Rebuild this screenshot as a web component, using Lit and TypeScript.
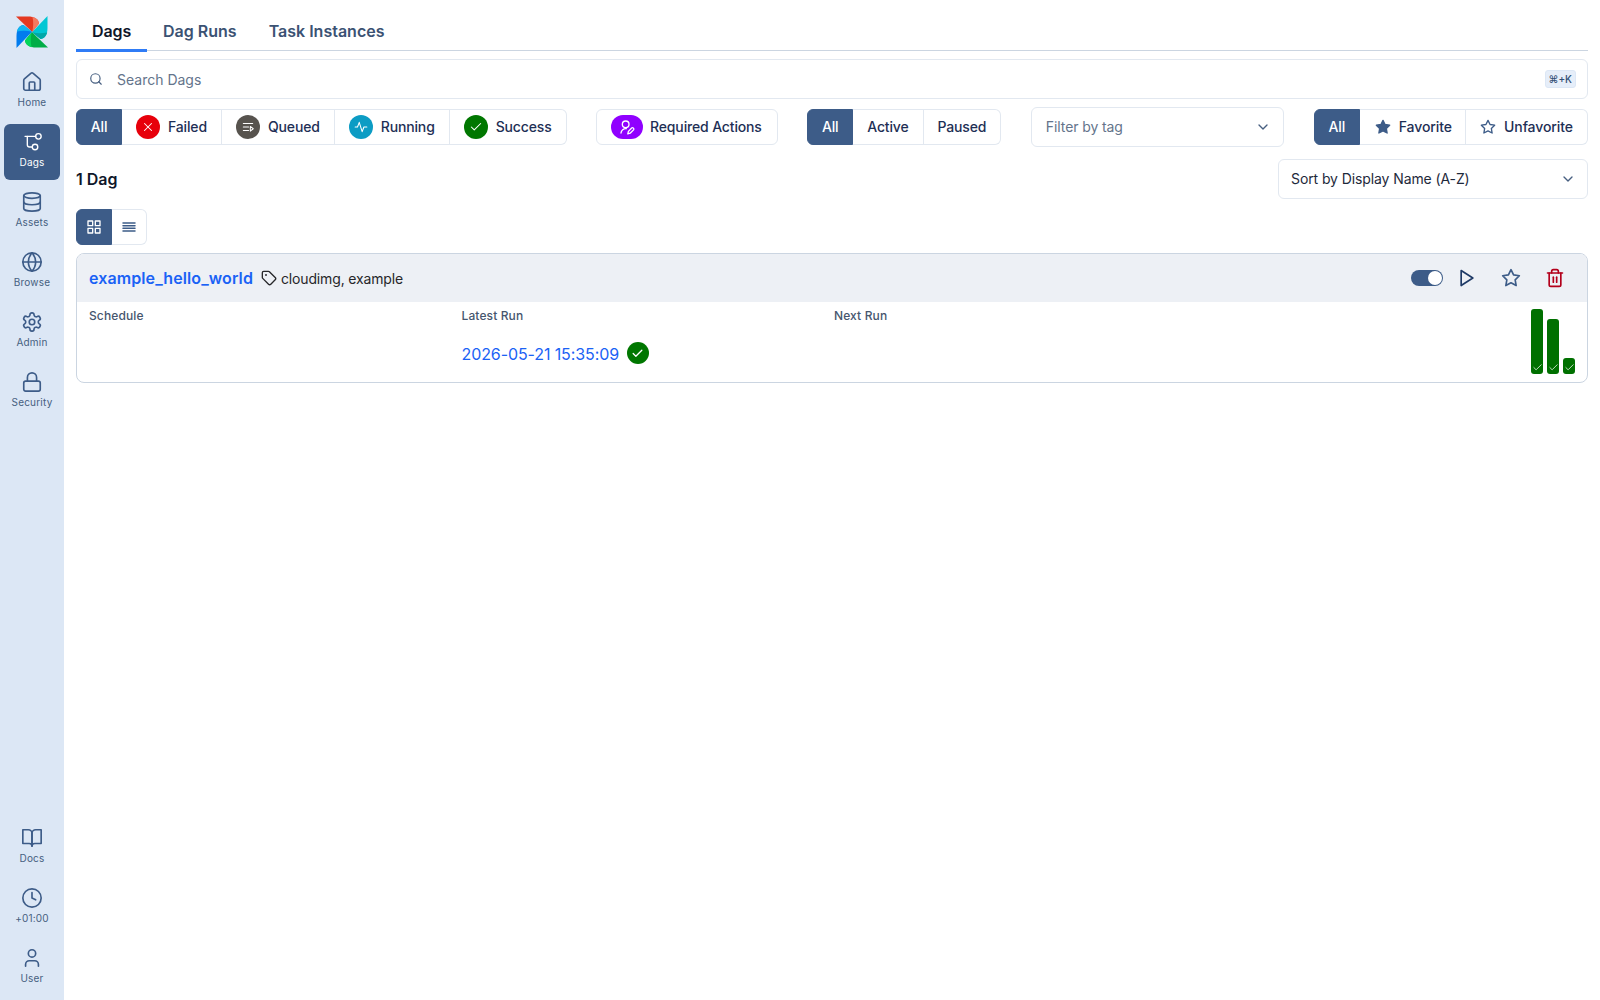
import { LitElement, html, css, svg } from 'lit';
import { customElement } from 'lit/decorators.js';

const icon = (body: unknown, size = 24, sw = 2) => html`<svg
  width=${size}
  height=${size}
  viewBox="0 0 24 24"
  fill="none"
  stroke="currentColor"
  stroke-width=${sw}
  stroke-linecap="round"
  stroke-linejoin="round"
>
  ${body}
</svg>`;

const icons = {
  home: svg`<path d="M15 21v-8a1 1 0 0 0-1-1h-4a1 1 0 0 0-1 1v8" /><path d="M3 10a2 2 0 0 1 .709-1.528l7-5.999a2 2 0 0 1 2.582 0l7 5.999A2 2 0 0 1 21 10v9a2 2 0 0 1-2 2H5a2 2 0 0 1-2-2z" />`,
  dags: svg`<path d="M4.400 5.800H16" /><circle cx="19" cy="5.800" r="3" /><path d="M6.900 5.800V15a2.500 2.500 0 0 0 2.500 2.500h2.900" /><circle cx="15.300" cy="17.500" r="3" />`,
  assets: svg`<ellipse cx="12" cy="5" rx="9" ry="3" /><path d="M3 5v14a9 3 0 0 0 18 0V5" /><path d="M3 12a9 3 0 0 0 18 0" />`,
  globe: svg`<circle cx="12" cy="12" r="10" /><path d="M2 12h20" /><path d="M12 2a15.3 15.3 0 0 1 4 10 15.3 15.3 0 0 1-4 10 15.3 15.3 0 0 1-4-10 15.3 15.3 0 0 1 4-10z" />`,
  gear: svg`<path d="M12.22 2h-.44a2 2 0 0 0-2 2v.18a2 2 0 0 1-1 1.73l-.43.25a2 2 0 0 1-2 0l-.15-.08a2 2 0 0 0-2.73.73l-.22.38a2 2 0 0 0 .73 2.73l.15.1a2 2 0 0 1 1 1.72v.51a2 2 0 0 1-1 1.74l-.15.09a2 2 0 0 0-.73 2.73l.22.38a2 2 0 0 0 2.73.73l.15-.08a2 2 0 0 1 2 0l.43.25a2 2 0 0 1 1 1.73V20a2 2 0 0 0 2 2h.44a2 2 0 0 0 2-2v-.18a2 2 0 0 1 1-1.73l.43-.25a2 2 0 0 1 2 0l.15.08a2 2 0 0 0 2.73-.73l.22-.39a2 2 0 0 0-.73-2.73l-.15-.08a2 2 0 0 1-1-1.74v-.5a2 2 0 0 1 1-1.74l.15-.09a2 2 0 0 0 .73-2.73l-.22-.38a2 2 0 0 0-2.73-.73l-.15.08a2 2 0 0 1-2 0l-.43-.25a2 2 0 0 1-1-1.73V4a2 2 0 0 0-2-2z" /><circle cx="12" cy="12" r="3" />`,
  lock: svg`<rect x="3" y="11" width="18" height="11" rx="2" ry="2" /><path d="M7 11V7a5 5 0 0 1 10 0v4" />`,
  book: svg`<path d="M2 3h6a4 4 0 0 1 4 4v14a3 3 0 0 0-3-3H2z" /><path d="M22 3h-6a4 4 0 0 0-4 4v14a3 3 0 0 1 3-3h7z" />`,
  clock: svg`<circle cx="12" cy="12" r="10" /><polyline points="12 6 12 12 16 14" />`,
  user: svg`<path d="M19 21v-2a4 4 0 0 0-4-4H9a4 4 0 0 0-4 4v2" /><circle cx="12" cy="7" r="4" />`,
  search: svg`<circle cx="11" cy="11" r="8" /><path d="m21 21-4.3-4.3" />`,
  chevron: svg`<path d="m6 9 6 6 6-6" />`,
  x: svg`<path d="M18 6 6 18" /><path d="m6 6 12 12" />`,
  queued: svg`<path d="M4 6h16" /><path d="M4 12h9" /><path d="M4 18h9" /><path d="M16 11l5 4-5 4z" />`,
  activity: svg`<path d="M2 12h4l3 -8 5 16 3 -8h5" />`,
  check: svg`<path d="M20 6 9 17l-5-5" />`,
  pen: svg`<circle cx="10" cy="8" r="5" /><path d="M3 21a7 7 0 0 1 8-6.5" /><path d="M19 13.5a2 2 0 0 1 2.8 2.8l-5 5-3.6.9.9-3.6z" />`,
  star: svg`<polygon points="12 2 15.09 8.26 22 9.27 17 14.14 18.18 21.02 12 17.77 5.82 21.02 7 14.14 2 9.27 8.91 8.26 12 2" />`,
  grid: svg`<rect x="3" y="3" width="7" height="7" /><rect x="14" y="3" width="7" height="7" /><rect x="14" y="14" width="7" height="7" /><rect x="3" y="14" width="7" height="7" />`,
  lines: svg`<path d="M3 6h18" /><path d="M3 10h18" /><path d="M3 14h18" /><path d="M3 18h18" />`,
  tag: svg`<path d="M12.586 2.586A2 2 0 0 0 11.172 2H4a2 2 0 0 0-2 2v7.172a2 2 0 0 0 .586 1.414l8.704 8.704a2.426 2.426 0 0 0 3.42 0l6.58-6.58a2.426 2.426 0 0 0 0-3.42z" /><circle cx="7.5" cy="7.5" r=".5" fill="currentColor" />`,
  play: svg`<polygon points="5 3 19 12 5 21 5 3" />`,
  trash: svg`<path d="M3 6h18" /><path d="M19 6v14a2 2 0 0 1-2 2H7a2 2 0 0 1-2-2V6" /><path d="M8 6V4a2 2 0 0 1 2-2h4a2 2 0 0 1 2 2v2" /><path d="M10 11v6" /><path d="M14 11v6" />`,
};

const topNav = [
  { label: 'Home', icon: icons.home },
  { label: 'Dags', icon: icons.dags, active: true },
  { label: 'Assets', icon: icons.assets },
  { label: 'Browse', icon: icons.globe },
  { label: 'Admin', icon: icons.gear },
  { label: 'Security', icon: icons.lock },
];

const bottomNav = [
  { label: 'Docs', icon: icons.book },
  { label: '+01:00', icon: icons.clock },
  { label: 'User', icon: icons.user },
];

const states = [
  { label: 'Failed', color: '#e7000b', icon: icons.x },
  { label: 'Queued', color: '#57534e', icon: icons.queued },
  { label: 'Running', color: '#0c9cc4', icon: icons.activity },
  { label: 'Success', color: '#007700', icon: icons.check },
];

// pinwheel blades, one per quarter turn, [main, highlight]
const blades = [
  [0, '#e43921', '#f47a5f'],
  [90, '#00c7d4', '#00a7a8'],
  [180, '#00ad46', '#04d659'],
  [270, '#017cee', '#11b5f0'],
] as const;

const runs = [65, 55, 16];

@customElement('app-root')
export class AppRoot extends LitElement {
  navItem(item: { label: string; icon: unknown; active?: boolean }) {
    return html`<a class="nav-item ${item.active ? 'active' : ''}">
      ${icon(item.icon, 22, item.active ? 1.5 : 1.8)}
      <span>${item.label}</span>
    </a>`;
  }

  render() {
    return html`
      <nav class="sidebar">
        <svg class="logo" width="32" height="32" viewBox="0 0 32 32">
          ${blades.map(
            ([deg, main, light]) => svg`<g transform="rotate(${deg} 16 16)">
              <path d="M0 .500H12C18 .500 22.500 3 23 7.500L16.200 16Z" fill=${main} />
              <path d="M16.500 .800C20 1.800 22.700 4 23 7.500L16.200 16C17.500 11 17.500 6 16.500 .800Z" fill=${light} />
            </g>`,
          )}
        </svg>
        ${topNav.map((item) => this.navItem(item))}
        <div class="spacer"></div>
        ${bottomNav.map((item) => this.navItem(item))}
      </nav>
      <main>
        <div class="tabs">
          <a class="tab current">Dags</a>
          <a class="tab">Dag Runs</a>
          <a class="tab">Task Instances</a>
        </div>

        <div class="search">
          <span class="search-icon">${icon(icons.search, 14)}</span>
          <span class="placeholder">Search Dags</span>
          <kbd>⌘+K</kbd>
        </div>

        <div class="filters">
          <div class="group">
            <button class="on">All</button>
            ${states.map(
              (s) => html`<button>
                <span class="badge" style="background:${s.color}">${icon(s.icon, 14, 1.800)}</span>
                ${s.label}
              </button>`,
            )}
          </div>
          <div class="group">
            <button class="required">
              <span class="badge pill">${icon(icons.pen, 16)}</span>
              Required Actions
            </button>
          </div>
          <div class="group">
            <button class="on">All</button>
            <button>Active</button>
            <button>Paused</button>
          </div>
          <div class="select tag-filter">
            <span class="placeholder">Filter by tag</span>
            ${icon(icons.chevron, 16)}
          </div>
          <div class="group favorites">
            <button class="on">All</button>
            <button class="favorite">
              <span class="star-solid">${icon(icons.star, 16)}</span>
              Favorite
            </button>
            <button>${icon(icons.star, 16)} Unfavorite</button>
          </div>
        </div>

        <div class="count-row">
          <h2>1 Dag</h2>
          <div class="select sort">
            <span>Sort by Display Name (A-Z)</span>
            ${icon(icons.chevron, 16)}
          </div>
        </div>

        <div class="group view-toggle">
          <button class="on">${icon(icons.grid, 16)}</button>
          <button>${icon(icons.lines, 16, 2.200)}</button>
        </div>

        <section class="card">
          <header>
            <a class="dag-name">example_hello_world</a>
            <span class="tags">${icon(icons.tag, 16)} cloudimg, example</span>
            <div class="actions">
              <span class="switch"><i></i></span>
              <span class="act play">${icon(icons.play, 20)}</span>
              <span class="act star">${icon(icons.star, 20)}</span>
              <span class="act trash">${icon(icons.trash, 20)}</span>
            </div>
          </header>
          <div class="card-body">
            <div class="col">
              <label>Schedule</label>
            </div>
            <div class="col">
              <label>Latest Run</label>
              <div class="run">
                <a>2026-05-21 15:35:09</a>
                <span class="badge small" style="background:#007700">${icon(icons.check, 13, 2.4)}</span>
              </div>
            </div>
            <div class="col">
              <label>Next Run</label>
            </div>
            <div class="bars">
              ${runs.map(
                (h) => html`<span class="bar" style="height:${h}px">${icon(icons.check, 11, 1.6)}</span>`,
              )}
            </div>
          </div>
        </section>
      </main>
    `;
  }

  static styles = css`
    :host {
      display: flex;
      height: 1000px;
      overflow: hidden;
      background: #fff;
      font-family: Inter, 'Liberation Sans', sans-serif;
      font-size: 14px;
      color: #0f172a;
      --blue: #3d5c88;
      --line: #e2e8f0;
      --ink: #1e2f55;
    }

    .sidebar {
      flex: 0 0 64px;
      display: flex;
      flex-direction: column;
      align-items: center;
      gap: 4px;
      padding: 16px 4px 4px;
      box-sizing: border-box;
      background: #dce7f5;
      color: #3d5c88;
    }
    .logo {
      margin-bottom: 12px;
      flex: none;
    }
    .spacer {
      flex: 1;
    }
    .nav-item {
      width: 56px;
      height: 56px;
      flex: none;
      border-radius: 6px;
      display: flex;
      flex-direction: column;
      align-items: center;
      justify-content: center;
      gap: 3px;
      padding-bottom: 5px;
      box-sizing: border-box;
      font-size: 10px;
      letter-spacing: 0.2px;
      color: #46607f;
    }
    .nav-item svg {
      color: #3d5c88;
    }
    .nav-item.active,
    .nav-item.active svg {
      background: var(--blue);
      color: #fff;
    }

    main {
      flex: 1;
      min-width: 0;
      padding: 12px 12px 0;
      display: flex;
      flex-direction: column;
    }

    .tabs {
      display: flex;
      height: 38px;
      flex: none;
      border-bottom: 1px solid #cbd5e1;
    }
    .tab {
      padding: 0 16px 2px;
      height: 40px;
      box-sizing: border-box;
      display: flex;
      align-items: center;
      font-size: 16px;
      font-weight: 600;
      color: #3b5273;
    }
    .tab.current {
      color: #0f172a;
      letter-spacing: -0.12px;
      border-bottom: 3px solid #2f7cf6;
      padding-top: 0;
      padding-bottom: 0;
    }

    .search {
      margin-top: 8px;
      height: 40px;
      flex: none;
      box-sizing: border-box;
      display: flex;
      align-items: center;
      border: 1px solid var(--line);
      border-radius: 6px;
      padding: 0 11px 0 12px;
    }
    .search-icon {
      display: flex;
      color: #475f80;
      margin-right: 14px;
    }
    .placeholder {
      color: #64748b;
    }
    kbd {
      margin-left: auto;
      font-family: inherit;
      font-size: 10px;
      font-weight: 500;
      line-height: 16px;
      padding: 0 3px;
      border-radius: 3px;
      background: #e6eef9;
      border: 1px solid #dce7f5;
      color: #334e74;
    }

    .filters {
      margin-top: 8px;
      height: 40px;
      flex: none;
      display: flex;
      align-items: center;
      gap: 29.500px;
    }
    .group {
      display: flex;
      height: 36px;
      flex: none;
    }
    .group button {
      all: unset;
      box-sizing: border-box;
      display: flex;
      align-items: center;
      gap: 8px;
      padding: 0 14px 1px;
      font-size: 14px;
      font-weight: 500;
      letter-spacing: -0.15px;
      color: var(--ink);
      border: 1px solid var(--line);
      border-left: 0;
    }
    .group button:first-child {
      border-left: 1px solid var(--line);
      border-radius: 6px 0 0 6px;
    }
    .group button:last-child {
      border-radius: 0 6px 6px 0;
    }
    .group button:only-child {
      border-radius: 6px;
    }
    .group button.on {
      width: 46px;
      justify-content: center;
      padding: 0 0 1px;
      background: var(--blue);
      border-color: var(--blue);
      color: #fff;
    }
    .group button.required {
      gap: 7px;
      padding: 0 15px 1px 14px;
    }
    .group.favorites button {
      letter-spacing: -0.08px;
    }
    .group button.favorite {
      padding: 0 13px 1px 15px;
    }
    .badge {
      width: 24px;
      height: 24px;
      border-radius: 50%;
      display: flex;
      align-items: center;
      justify-content: center;
      color: #fff;
      flex: none;
    }
    .badge.pill {
      width: 32px;
      border-radius: 12px;
      background: #9000ff;
    }
    .badge.small {
      width: 22px;
      height: 22px;
      margin-top: -1px;
    }
    .star-solid {
      display: flex;
      color: var(--blue);
    }
    .star-solid svg {
      fill: currentColor;
    }
    .group button > svg {
      color: var(--blue);
    }
    .group button.on > svg {
      color: #fff;
    }

    .select {
      height: 40px;
      box-sizing: border-box;
      display: flex;
      align-items: center;
      justify-content: space-between;
      border: 1px solid var(--line);
      border-radius: 6px;
      padding: 0 11px 1px 12px;
      letter-spacing: -0.1px;
      color: #1e293b;
    }
    .select svg {
      color: #475f80;
    }
    .tag-filter {
      flex: 1;
      padding-left: 14px;
      padding-right: 12px;
    }
    .sort {
      width: 310px;
    }

    .count-row {
      margin-top: 12px;
      display: flex;
      align-items: center;
      justify-content: space-between;
      flex: none;
    }
    h2 {
      margin: 0;
      font-size: 16px;
      font-weight: 600;
      color: #0f172a;
    }

    .view-toggle {
      margin-top: 10px;
      align-self: flex-start;
    }
    .group.view-toggle button {
      padding: 0;
      width: 35.500px;
      justify-content: center;
    }

    .card {
      margin-top: 8px;
      height: 130px;
      flex: none;
      box-sizing: border-box;
      border: 1px solid #cbd5e1;
      border-radius: 8px;
      overflow: hidden;
    }
    header {
      height: 48px;
      box-sizing: border-box;
      display: flex;
      align-items: center;
      padding: 0 12px;
      background: #edf0f5;
    }
    .dag-name {
      font-size: 16px;
      font-weight: 600;
      letter-spacing: 0.1px;
      color: #1a62f5;
    }
    .tags {
      margin-left: 8px;
      display: flex;
      align-items: center;
      gap: 4px;
      letter-spacing: -0.15px;
      color: #27272a;
    }
    .actions {
      margin-left: auto;
      display: flex;
      align-items: center;
    }
    .switch {
      width: 32px;
      height: 16px;
      border-radius: 8px;
      background: var(--blue);
      display: flex;
      justify-content: flex-end;
      align-items: center;
      padding: 1px;
      box-sizing: border-box;
    }
    .switch i {
      width: 14px;
      height: 14px;
      border-radius: 50%;
      background: #fff;
    }
    .act {
      display: flex;
      width: 20px;
      height: 20px;
    }
    .act.play {
      margin-left: 14px;
      color: #1e3a66;
    }
    .act.star {
      margin-left: 24px;
      color: var(--blue);
    }
    .act.trash {
      margin-left: 24px;
      margin-right: 10px;
      color: #b3001b;
    }

    .card-body {
      display: grid;
      grid-template-columns: repeat(3, 372.5px) 1fr;
      padding: 6px 12px 0;
    }
    .col label {
      display: block;
      font-size: 12px;
      font-weight: 500;
      line-height: 16px;
      letter-spacing: 0.12px;
      color: #46566e;
    }
    .run {
      margin-top: 19px;
      display: flex;
      align-items: center;
      gap: 8px;
      font-size: 16px;
      letter-spacing: -0.1px;
      color: #1a62f5;
    }
    .bars {
      display: flex;
      justify-content: flex-end;
      align-items: flex-end;
      gap: 4px;
      height: 65px;
      margin-top: 1px;
    }
    .bar {
      width: 12px;
      border-radius: 3px;
      background: #007000;
      color: #fff;
      display: flex;
      align-items: flex-end;
      justify-content: center;
      padding-bottom: 1px;
      box-sizing: border-box;
    }
  `;
}
